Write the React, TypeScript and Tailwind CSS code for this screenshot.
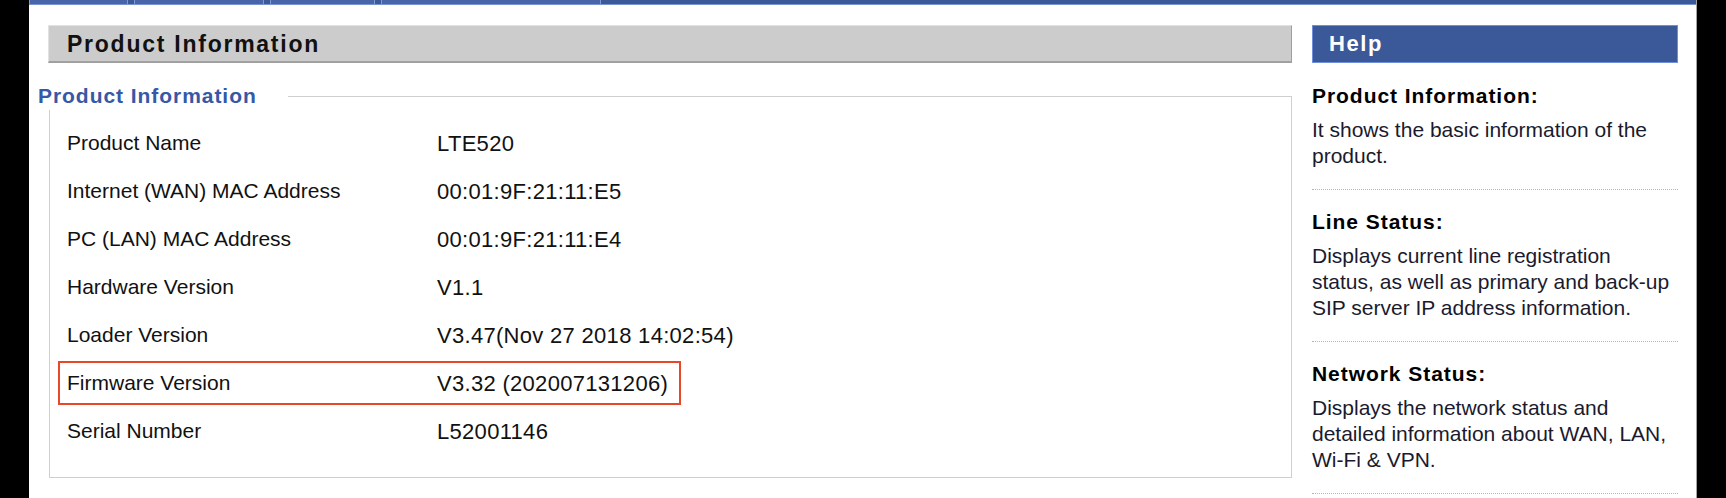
import React from 'react';

const rows = [
  { label: 'Product Name', value: 'LTE520' },
  { label: 'Internet (WAN) MAC Address', value: '00:01:9F:21:11:E5' },
  { label: 'PC (LAN) MAC Address', value: '00:01:9F:21:11:E4' },
  { label: 'Hardware Version', value: 'V1.1' },
  { label: 'Loader Version', value: 'V3.47(Nov 27 2018 14:02:54)' },
  { label: 'Firmware Version', value: 'V3.32 (202007131206)', marked: true },
  { label: 'Serial Number', value: 'L52001146' },
];

const helpItems = [
  {
    title: 'Product Information:',
    lines: ['It shows the basic information of the', 'product.'],
  },
  {
    title: 'Line Status:',
    lines: [
      'Displays current line registration',
      'status, as well as primary and back-up',
      'SIP server IP address information.',
    ],
  },
  {
    title: 'Network Status:',
    lines: [
      'Displays the network status and',
      'detailed information about WAN, LAN,',
      'Wi-Fi & VPN.',
    ],
  },
];

// tabs of the top menu, only their bottom edge is visible
const tabs = [99, 130, 105, 220];

export default function App() {
  return (
    <div className="flex h-[498px] w-[1726px] overflow-hidden bg-black font-['Liberation_Sans',Arial,sans-serif]">
      <div className="w-[29px] shrink-0" />
      <div className="flex w-[1668px] shrink-0 flex-col border-r border-[#a3a3a3] bg-white">
        {/* top menu bar */}
        <div className="flex h-[5px] shrink-0 gap-[6px] border-b border-[#7b93cf] bg-[#3b5998]">
          {tabs.map((w, i) => (
            <div
              key={i}
              style={{ width: w }}
              className="h-full border-x border-[#8198cf] bg-[#4765a8]"
            />
          ))}
        </div>

        <div className="flex gap-[20px] pl-[19px] pt-[20px]">
          {/* main panel */}
          <div className="w-[1244px] shrink-0">
            <div className="flex h-[38px] items-center border border-b-2 border-t-[#e2e2e2] border-l-[#e2e2e2] border-r-[#a0a0a0] border-b-[#a0a0a0] bg-[#cccccc] pl-[18px]">
              <span className="text-[23px] font-bold leading-[36px] tracking-[1.75px] text-[#111]">
                Product Information
              </span>
            </div>

            <div className="ml-[1px] mt-[33px] w-[1243px] border border-[#cfcfcf] pb-[22px]">
              <div className="-ml-[12px] -mt-[15px] mb-[9px] w-[250px] bg-white text-[21px] font-bold leading-[28px] tracking-[0.95px] text-[#3658a6]">
                Product Information
              </div>
              {rows.map((r) => (
                <div key={r.label} className="flex h-[48px] items-center">
                  <div
                    className={
                      'ml-[8px] flex h-[44px] items-center border-2 pl-[7px] pr-[11px] text-[21px] text-[#111] ' +
                      (r.marked ? 'border-[#e8482a]' : 'border-transparent')
                    }
                  >
                    <span className="w-[370px] shrink-0">{r.label}</span>
                    <span className="text-[22px] tracking-[0.3px]">{r.value}</span>
                  </div>
                </div>
              ))}
            </div>
          </div>

          {/* help panel */}
          <div className="w-[366px] shrink-0">
            <div className="flex h-[38px] items-center border border-[#6f8edb] bg-[#3b5998] pl-[16px]">
              <span className="text-[22px] font-bold leading-[36px] tracking-[1.6px] text-white">
                Help
              </span>
            </div>
            {helpItems.map((h, i) => (
              <div
                key={h.title}
                className={
                  'border-b border-dotted border-[#b5b5b5] pb-[20px] ' +
                  (i === 0 ? 'pt-[20px]' : 'pt-[19px]')
                }
              >
                <div className="mb-[8px] text-[21px] font-bold leading-[26px] tracking-[0.95px] text-black">
                  {h.title}
                </div>
                <div className="text-[21px] leading-[26px] text-[#1a1a2e]">
                  {h.lines.map((l, j) => (
                    <div key={j} className="whitespace-nowrap">
                      {l}
                    </div>
                  ))}
                </div>
              </div>
            ))}
          </div>
        </div>
      </div>
    </div>
  );
}
